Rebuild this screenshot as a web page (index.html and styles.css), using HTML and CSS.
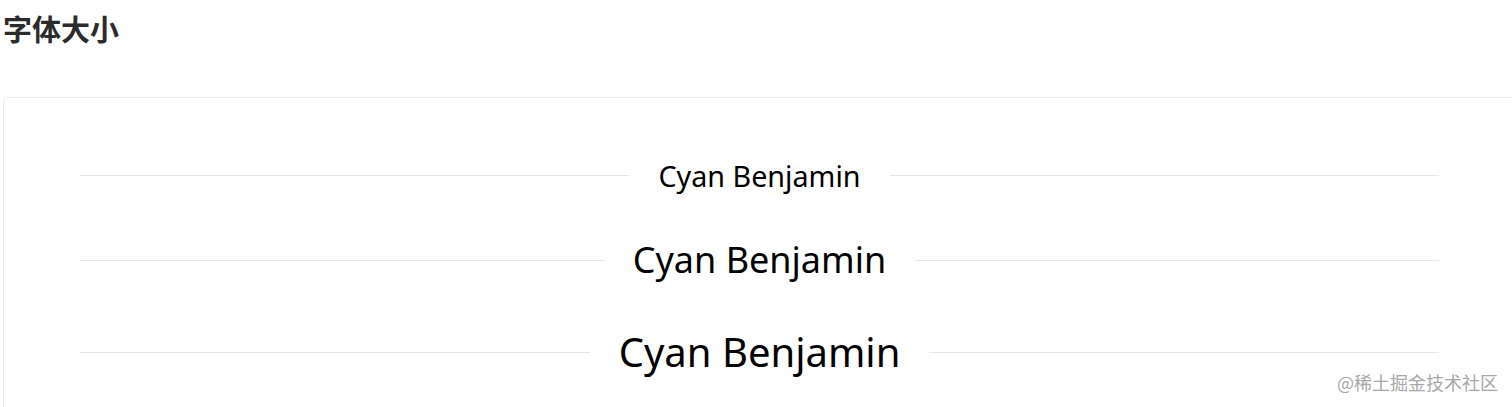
FILE: index.html
```html
<!DOCTYPE html>
<html>
<head>
    <title>字体大小</title>
    <link rel="stylesheet" href="styles.css">
</head>
<body>
    <h2 class="section-title">字体大小</h2>
    <div class="demo-card">
        <div class="divider size-small"><span class="divider-text">Cyan Benjamin</span></div>
        <div class="divider size-middle"><span class="divider-text">Cyan Benjamin</span></div>
        <div class="divider size-large"><span class="divider-text">Cyan Benjamin</span></div>
    </div>
    <div class="watermark">@稀土掘金技术社区</div>
</body>
</html>
```

FILE: styles.css
```css
body {
    margin: 0;
    padding: 0 0 0 3px;
    background-color: #fff;
    font-family: "Noto Sans", "Noto Sans CJK SC", sans-serif;
    overflow: hidden;
}
.section-title {
    margin: 0;
    padding-top: 8px;
    font-family: "Noto Sans CJK SC", sans-serif;
    font-size: 29px;
    font-weight: 700;
    line-height: 40px;
    color: #2b2b2b;
}
.demo-card {
    margin-top: 49px;
    width: 1540px;
    height: 400px;
    border: 1px solid #ebebeb;
    border-radius: 5px;
    box-sizing: border-box;
    padding: 56px 0 0 76px;
}
.divider {
    display: flex;
    align-items: center;
    width: 1359px;
    color: #000;
    white-space: nowrap;
}
.divider::before,
.divider::after {
    content: "";
    flex: 1;
    border-top: 1px solid #e6e6e6;
}
.divider-text {
    padding: 0 29px;
    line-height: 1.5;
}
.size-small {
    font-size: 28.7px;
}
.size-middle {
    font-size: 36px;
    margin-top: 36px;
}
.size-large {
    font-size: 40px;
    margin-top: 35px;
}
.watermark {
    position: absolute;
    right: 14px;
    bottom: 12px;
    font-family: "Noto Sans CJK SC", sans-serif;
    font-size: 18px;
    color: #a8a8a8;
}
```
